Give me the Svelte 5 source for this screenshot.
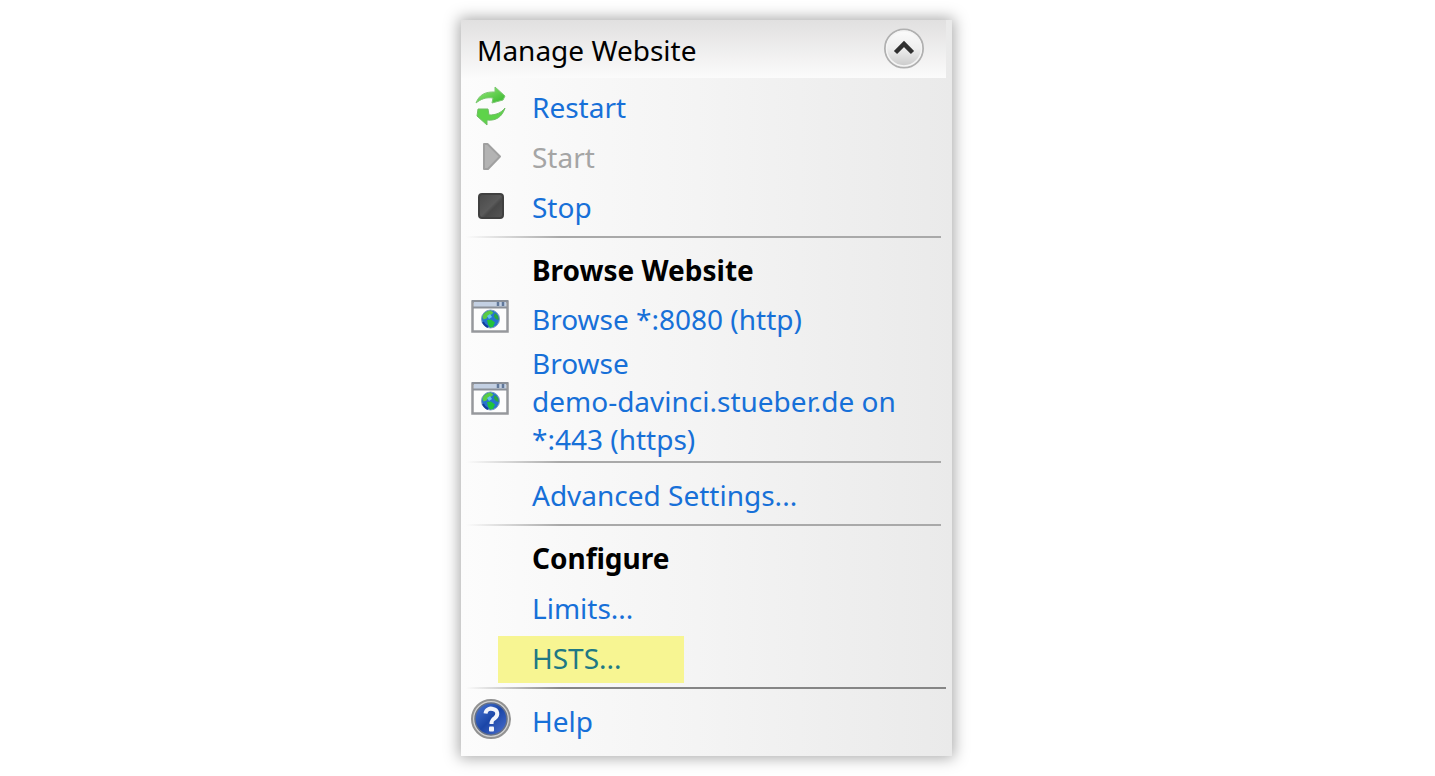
<script>
  let open = $state(true);
</script>

{#snippet browserIcon()}
  <svg class="icon" width="40" height="36" viewBox="0 0 40 36" aria-hidden="true">
    <rect x="2.500" y="2.500" width="35" height="30" fill="#fdfdfd" stroke="#96989c" stroke-width="2.500" />
    <rect x="4" y="3" width="32" height="5" fill="#c3d0e3" />
    <path d="M2 2h36M3 8.500h34" stroke="#8b9098" stroke-width="2" />
    <path d="M28 3v4M33 3v4" stroke="#61789a" stroke-width="2.500" />
    <circle cx="20.500" cy="20" r="9" fill="#2674cf" stroke="#7d9fc4" />
    <path d="M12.500 18c1-4 4-6 8-6.500l3 2-2 2-3 1-2 3-3 1z" fill="#5acb43" />
    <path d="M17 21l4-.500 4 3-2 4.500-3 .500-2-3z" fill="#20c33b" />
    <path d="M25 14l3 3 .700 4-3-1-2-3z" fill="#2ba83d" />
    <path d="M17 17l3-2 2 3-3 2z" fill="#62c4ed" />
    <path d="M13 23c1 3 3 4 5 5" fill="none" stroke="#123e9d" stroke-width="2" />
  </svg>
{/snippet}

<main>
  <section class="panel" aria-labelledby="title">
    <header>
      <h1 id="title">Manage Website</h1>
      <button class="toggle" aria-label="Collapse" aria-expanded={open} onclick={() => (open = !open)}>
        <svg width="42" height="42" viewBox="0 0 42 42" aria-hidden="true">
          <defs>
            <linearGradient id="knob" x2="0" y2="1">
              <stop stop-color="#fcfcfc" /><stop offset=".5" stop-color="#eeeeee" /><stop offset="1" stop-color="#c8c8c8" />
            </linearGradient>
          </defs>
          <circle cx="21" cy="20.500" r="19" fill="url(#knob)" stroke="#b0b0b0" stroke-width="2" />
          <circle cx="21" cy="20.500" r="17.500" fill="none" stroke="#f4f4f4" stroke-width="1.500" />
          <path d="M12.500 24.500L21 16l8.500 8.500" fill="none" stroke="#303030" stroke-width="4.500" />
        </svg>
      </button>
    </header>

    {#if open}
      <div class="actions">
        <button class="row">
          <svg class="icon" width="40" height="42" viewBox="0 0 40 42" aria-hidden="true">
            <defs>
              <linearGradient id="green" x2="1" y2="1"><stop stop-color="#9bed7e" /><stop offset="1" stop-color="#35b62b" /></linearGradient>
            </defs>
            <path d="M6 17C9 9 15 5.500 25 6L25 1L35 10L33 14L22 17L23 12C16 11 11 13 6 17Z" fill="url(#green)" stroke="#7cc772" />
            <path d="M35 22C32 31 26 35 17 34L17 39L7 30L8 23L18 23L19 29C26 29 31 27 35 22Z" fill="#5ed34a" stroke="#6fbd63" />
          </svg>
          <span>Restart</span>
        </button>
        <button class="row" disabled>
          <svg class="icon" width="40" height="36" viewBox="0 0 40 36" aria-hidden="true">
            <path d="M14 5h3.500L30 17.500 18 30h-4z" fill="#b3b3b3" stroke="#a0a0a0" stroke-width="2" stroke-linejoin="round" />
          </svg>
          <span>Start</span>
        </button>
        <button class="row">
          <svg class="icon" width="40" height="36" viewBox="0 0 40 36" aria-hidden="true">
            <defs>
              <linearGradient id="block" x2="1" y2="1"><stop stop-color="#494949" /><stop offset=".5" stop-color="#5a5a5a" /><stop offset=".6" stop-color="#484848" /><stop offset="1" stop-color="#565656" /></linearGradient>
            </defs>
            <rect x="9" y="5" width="24" height="24" rx="3" fill="url(#block)" stroke="#404040" stroke-width="2" />
          </svg>
          <span>Stop</span>
        </button>
        <hr />
        <h2>Browse Website</h2>
        <a class="row compact" href="#http">{@render browserIcon()}<span>Browse *:8080 (http)</span></a>
        <a class="row multi" href="#https">{@render browserIcon()}<span>Browse<br />demo-davinci.stueber.de on *:443 (https)</span></a>
        <hr />
        <button class="row"><span>Advanced Settings...</span></button>
        <hr />
        <h2>Configure</h2>
        <button class="row"><span>Limits...</span></button>
        <button class="row marked"><span>HSTS...</span></button>
        <hr class="strong" />
        <a class="row" href="#help">
          <svg class="icon" width="42" height="42" viewBox="0 0 42 42" aria-hidden="true">
            <defs>
              <linearGradient id="blue" x2="1" y2="1"><stop stop-color="#4a78d5" /><stop offset=".5" stop-color="#1b46a8" /><stop offset="1" stop-color="#4f72cf" /></linearGradient>
            </defs>
            <circle cx="21" cy="19" r="19" fill="#d2d2d2" stroke="#929292" stroke-width="2" />
            <circle cx="21" cy="19" r="16" fill="url(#blue)" stroke="#657087" stroke-width="1.500" />
            <path d="M15.500 13.500C16 9 20 8 23 9C28 10 28.500 15 25 18C22 20 21.500 21 21.500 24" fill="none" stroke="#f1f4fb" stroke-width="4" />
            <rect x="19" y="26.500" width="5" height="5" rx="1" fill="#f1f4fb" />
          </svg>
          <span>Help</span>
        </a>
      </div>
    {/if}
  </section>
</main>

<style>
  :global(body) { margin: 0; background: #fff; }
  main {
    display: flex;
    justify-content: center;
    padding: 20px 22px 20px 0;
    font: 28px/38px "Noto Sans", "Open Sans", sans-serif;
  }
  .panel {
    box-sizing: border-box;
    width: 100%;
    max-width: 491px;
    padding-bottom: 9px;
    background: linear-gradient(90deg, #fcfcfc, #f4f4f4 48%, #eaeaea);
    box-shadow: 0 0 14px 2px rgb(0 0 0 / 34%);
  }
  header {
    display: flex;
    align-items: center;
    justify-content: space-between;
    height: 58px;
    margin: 0 6px 5px 0;
    padding: 0 21px 0 16px;
    box-sizing: border-box;
    background: linear-gradient(#e1e0e0, #fbfbfb);
  }
  h1, h2 { margin: 0; font-size: inherit; color: #000; }
  h1 { padding-top: 2px; font-weight: 400; }
  h2 { padding: 5px 0 7px 71px; font-weight: 700; }
  button { border: 0; padding: 0; background: none; font: inherit; text-align: left; cursor: pointer; }
  .toggle { display: flex; }
  .row {
    display: grid;
    grid-template-columns: 42px 1fr;
    column-gap: 20px;
    align-items: center;
    box-sizing: border-box;
    width: 100%;
    min-height: 50px;
    padding: 0 20px 2px 9px;
    color: #1770d8;
    text-decoration: none;
  }
  .row span { grid-column: 2; }
  .icon { grid-column: 1; grid-row: 1; overflow: visible; }
  .compact { min-height: 48px; }
  .compact .icon, .multi .icon { margin-bottom: 4px; }
  .multi { margin-bottom: -2px; }
  .row:disabled { color: #a5a5a5; cursor: default; }
  .marked { color: #207884; background: linear-gradient(#f7f592, #f7f592) 37px 2px / 186px 47px no-repeat; }
  hr {
    height: 2px;
    margin: 3px 11px 8px 5px;
    border: 0;
    background: linear-gradient(90deg, transparent, #a9a9a9 20%, #a9a9a9);
  }
  .strong { margin-right: 6px; background: linear-gradient(90deg, transparent, #858585 20%, #858585); }
</style>
